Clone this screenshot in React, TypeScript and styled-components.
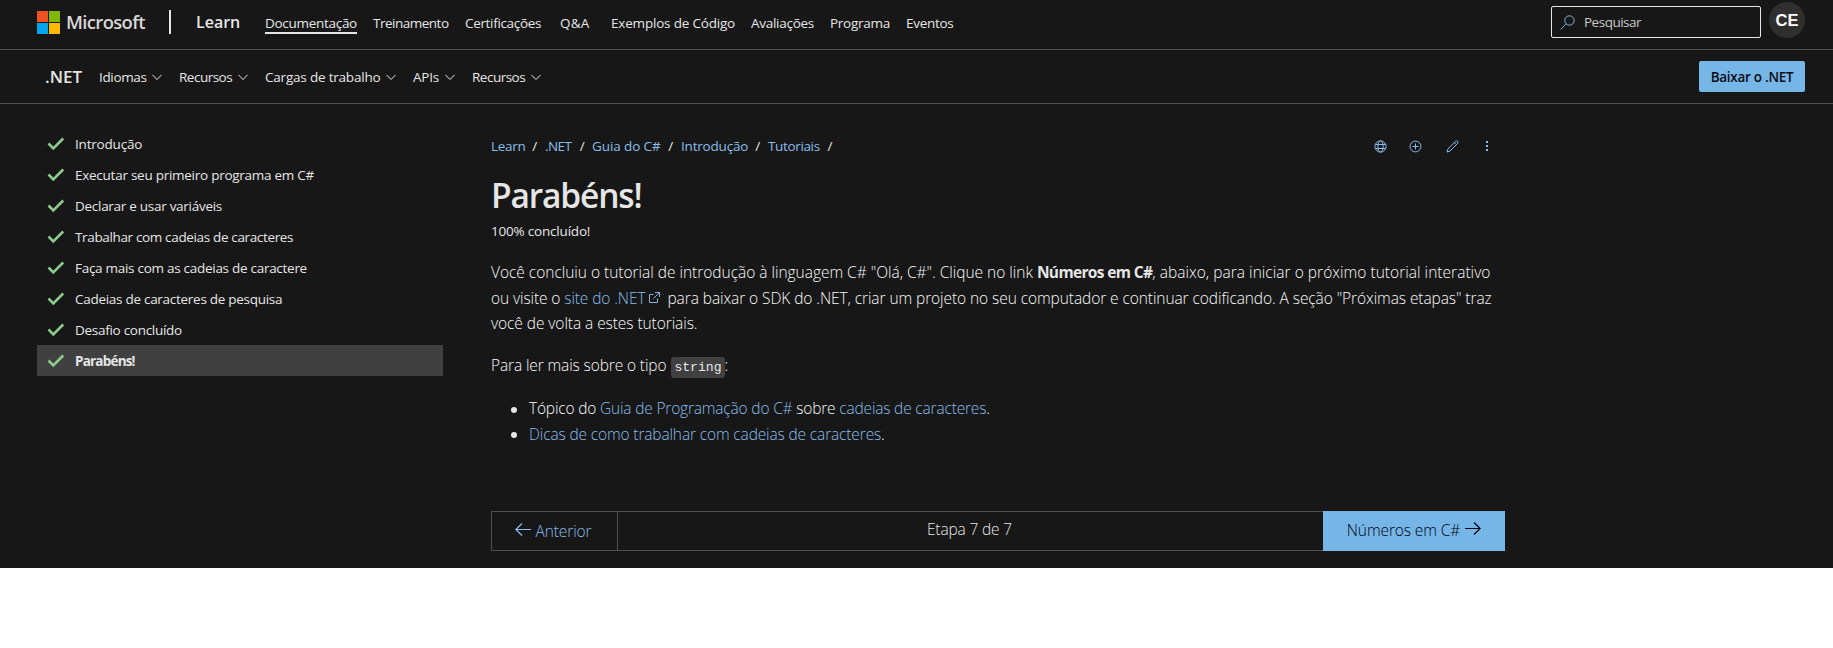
import React from 'react';
import styled, { createGlobalStyle } from 'styled-components';

const GlobalStyle = createGlobalStyle`
  * { box-sizing: border-box; }
  body { margin: 0; background: #fff; font-family: "Open Sans", "Noto Sans", sans-serif; color: #e6e6e6; }
  a { color: inherit; text-decoration: none; }
  ul { list-style: none; margin: 0; padding: 0; }
`;

const Page = styled.div`
  height: 568px;
  background: #171717;
  font-size: 13.5px;
  white-space: nowrap;
`;

const Bar = styled.header<{ $height: number; $left: number }>`
  display: flex;
  align-items: center;
  height: ${p => p.$height}px;
  padding: 0 28px 0 ${p => p.$left}px;
  border-bottom: 1px solid #505050;
`;

const TopBar = styled(Bar)`
  align-items: flex-start;
  padding-top: 2px;
`;

const Logo = styled.a`
  display: flex;
  align-items: center;
  gap: 6px;
  margin-top: 8px;
  height: 24px;
  width: 132px;
`;

const Squares = styled.span`
  display: grid;
  grid-template-columns: 11px 11px;
  grid-auto-rows: 11px;
  gap: 1px;
`;

const Square = styled.i<{ $color: string }>`
  background: ${p => p.$color};
`;

const Wordmark = styled.span`
  font-size: 18.4px;
  font-weight: 600;
  letter-spacing: -0.62px;
  line-height: 24px;
  color: #d8d8d8;
`;

const Divider = styled.span`
  width: 2px;
  height: 24px;
  margin-top: 8px;
  background: #e6e6e6;
`;

const Brand = styled.a<{ $size: number; $width: number }>`
  font-size: ${p => p.$size}px;
  font-weight: 600;
  line-height: 24px;
  width: ${p => p.$width}px;
`;

const LearnBrand = styled(Brand)`
  margin: 8px 0 0 25px;
`;

const TopLink = styled.a<{ $width: number; $gap: number; $track: number; $active?: boolean }>`
  width: ${p => p.$width}px;
  height: 22px;
  margin-top: 10px;
  margin-right: ${p => p.$gap}px;
  line-height: 22px;
  letter-spacing: ${p => p.$track}px;
  border-bottom: ${p => (p.$active ? '2px solid #e6e6e6' : 'none')};
`;

const Search = styled.div`
  display: flex;
  align-items: center;
  gap: 9px;
  width: 210px;
  height: 32px;
  margin: 4px 8px 0 auto;
  padding-left: 8px;
  border: 1px solid #e6e6e6;
  border-radius: 2px;
  letter-spacing: -0.5px;
  color: #c8c8c8;
`;

const Avatar = styled.div`
  width: 36px;
  height: 36px;
  border-radius: 50%;
  background: #2f2f2f;
  color: #fff;
  font: bold 16.5px/36px "Liberation Sans", Arial, sans-serif;
  text-align: center;
`;

const MenuButton = styled.a<{ $width: number; $track: number }>`
  display: flex;
  align-items: center;
  justify-content: space-between;
  width: ${p => p.$width}px;
  margin-right: 17px;
  letter-spacing: ${p => p.$track}px;
  svg { margin-top: 2px; }
`;

const Download = styled.a`
  width: 106px;
  height: 31px;
  margin-left: auto;
  border-radius: 2px;
  background: #75b6e7;
  color: #0b0b14;
  font-weight: 600;
  line-height: 32px;
  text-align: center;
  letter-spacing: -0.28px;
`;

const Body = styled.div`
  display: grid;
  grid-template-columns: 406px 1014px;
  column-gap: 48px;
  padding: 24px 0 0 37px;
`;

const Unit = styled.li<{ $track: number; $active?: boolean }>`
  display: flex;
  align-items: center;
  gap: 10px;
  height: 31px;
  padding-left: 10px;
  letter-spacing: ${p => p.$track}px;
  font-weight: ${p => (p.$active ? 700 : 400)};
  background: ${p => (p.$active ? '#404040' : 'transparent')};
`;

const Main = styled.main`
  padding-top: 6px;
`;

const CrumbRow = styled.div`
  display: flex;
  justify-content: space-between;
  height: 24px;
  line-height: 24px;
`;

const Crumbs = styled.nav`
  display: flex;
`;

const Crumb = styled.span<{ $width: number; $track: number }>`
  display: flex;
  justify-content: space-between;
  width: ${p => p.$width}px;
  margin-right: 8px;
  letter-spacing: ${p => p.$track}px;
`;

const Link = styled.a`
  color: #8abdea;
`;

const Actions = styled.div`
  display: flex;
  align-items: center;
  color: #8abdea;
  gap: 20px;
  padding-right: 9px;
`;

const Title = styled.h1`
  margin: 15px 0 0;
  font-size: 33.5px;
  font-weight: 600;
  line-height: 44px;
  letter-spacing: -1.15px;
`;

const Progress = styled.p`
  margin: 1px 0 0;
  line-height: 26px;
  letter-spacing: -0.2px;
  height: 42px;
`;

const Paragraph = styled.p`
  margin: 0 0 16px;
  font-size: 15.5px;
  font-weight: 300;
  line-height: 25.6px;
  color: #fafafa;
`;

const Run = styled.span<{ $track: number }>`
  letter-spacing: ${p => p.$track}px;
`;

const Strong = styled.strong`
  font-weight: 700;
  letter-spacing: -0.65px;
  color: #e6e6e6;
`;

const OutIcon = styled.svg`
  width: 11px;
  height: 11px;
  margin: 0 7px 0 4px;
  vertical-align: 1px;
  color: #83b4de;
`;

const Code = styled.code`
  padding: 3px 3px;
  margin-left: 5px;
  border-radius: 3px;
  background: #404040;
  color: #e6e6e6;
  font: 13.1px "Liberation Mono", monospace;
`;

const Bullets = styled.ul`
  padding-top: 2px;
`;

const Bullet = styled.li<{ $track: number }>`
  display: flex;
  align-items: center;
  font-size: 15.5px;
  font-weight: 300;
  line-height: 25.6px;
  color: #fafafa;
  letter-spacing: ${p => p.$track}px;
  &::before {
    content: '';
    width: 6px;
    height: 6px;
    margin: 1px 12px 0 20px;
    border-radius: 50%;
    background: #e6e6e6;
  }
`;

const Pager = styled.nav`
  display: grid;
  grid-template-columns: 127px 1fr 182px;
  height: 40px;
  margin-top: 63px;
  font-size: 15.5px;
  font-weight: 300;
  text-align: center;
`;

const Step = styled.div<{ $kind: 'prev' | 'status' | 'next' }>`
  display: flex;
  align-items: center;
  justify-content: center;
  gap: ${p => (p.$kind === 'prev' ? 4 : 5)}px;
  padding: ${p => ({ prev: '0 2px 0 0', status: '0 2px 3px 0', next: '0 0 1px' })[p.$kind]};
  border: 1px solid ${p => (p.$kind === 'next' ? '#75b6e7' : '#505050')};
  border-width: ${p => (p.$kind === 'status' ? '1px 0' : '1px')};
  background: ${p => (p.$kind === 'next' ? '#75b6e7' : 'transparent')};
  color: ${p => ({ prev: '#8abdea', status: '#e6e6e6', next: '#000010' })[p.$kind]};
  letter-spacing: ${p => (p.$kind === 'status' ? -0.15 : -0.1)}px;
  svg { margin-bottom: 2px; }
`;

const Check = () => (
  <svg width="18" height="14" viewBox="0 0 18 14" fill="none" stroke="#8dcb8d" strokeWidth="2.6">
    <path d="M1.5 6.5 6.3 11.3 16.2 1.5" />
  </svg>
);

const Chevron = () => (
  <svg width="10" height="7" viewBox="0 0 10 7" fill="none" stroke="currentColor">
    <path d="m.4 .8 4.6 4.7 4.6-4.7" />
  </svg>
);

const Arrow = ({ back }: { back?: boolean }) => (
  <svg width="16" height="14" viewBox="0 0 16 14" fill="none" stroke="currentColor" strokeWidth="1.2">
    <path d={back ? 'M16 6.5H.8M7 .5l-6.2 6L7 12.5' : 'M0 6.5h15.2M9 .5l6.2 6-6.2 6'} />
  </svg>
);

const topLinks = [
  ['Documentação', 92, 16, -0.29], ['Treinamento', 75, 17, -0.5], ['Certificações', 76, 19, -0.33],
  ['Q&A', 31, 20, 0.2], ['Exemplos de Código', 124, 16, -0.19], ['Avaliações', 63, 16, -0.27],
  ['Programa', 60, 16, -0.26], ['Eventos', 48, 0, -0.28],
] as const;

const menus = [
  ['Idiomas', 63, -0.35], ['Recursos', 69, -0.5], ['Cargas de trabalho', 131, -0.2],
  ['APIs', 42, -0.2], ['Recursos', 69, -0.5],
] as const;

const units = [
  ['Introdução', -0.2], ['Executar seu primeiro programa em C#', -0.26], ['Declarar e usar variáveis', -0.28],
  ['Trabalhar com cadeias de caracteres', -0.35], ['Faça mais com as cadeias de caractere', -0.28],
  ['Cadeias de caracteres de pesquisa', -0.28], ['Desafio concluído', -0.28], ['Parabéns!', -0.8],
] as const;

const crumbs = [
  ['Learn', 46, -0.3], ['.NET', 39, -0.6], ['Guia do C#', 81, -0.1], ['Introdução', 79, -0.2], ['Tutoriais', 64, -0.35],
] as const;

export default function App() {
  return (
    <Page>
      <GlobalStyle />
      <TopBar $height={50} $left={37}>
        <Logo href="#">
          <Squares>
            <Square $color="#f25022" /><Square $color="#7fba00" />
            <Square $color="#00a4ef" /><Square $color="#ffb900" />
          </Squares>
          <Wordmark>Microsoft</Wordmark>
        </Logo>
        <Divider />
        <LearnBrand href="#" $size={16} $width={69}>Learn</LearnBrand>
        {topLinks.map(([label, width, gap, track], i) => (
          <TopLink href="#" key={label} $width={width} $gap={gap} $track={track} $active={i === 0}>{label}</TopLink>
        ))}
        <Search>
          <svg width="15" height="15" viewBox="0 0 15 15" fill="none" stroke="#83b4de">
            <circle cx="9.5" cy="5.5" r="4.7" />
            <path d="M6.2 8.8.6 14.4" />
          </svg>
          Pesquisar
        </Search>
        <Avatar>CE</Avatar>
      </TopBar>

      <Bar $height={54} $left={45}>
        <Brand href="#" $size={17} $width={54}>.NET</Brand>
        {menus.map(([label, width, track], i) => (
          <MenuButton href="#" key={i} $width={width} $track={track}>{label}<Chevron /></MenuButton>
        ))}
        <Download href="#">Baixar o .NET</Download>
      </Bar>

      <Body>
        <ul>
          {units.map(([label, track], i) => (
            <Unit key={label} $track={track} $active={i === 7}><Check />{label}</Unit>
          ))}
        </ul>
        <Main>
          <CrumbRow>
            <Crumbs>
              {crumbs.map(([label, width, track]) => (
                <Crumb key={label} $width={width} $track={track}><Link href="#">{label}</Link><span>/</span></Crumb>
              ))}
            </Crumbs>
            <Actions>
              <svg width="13" height="13" viewBox="0 0 13 13" fill="none" stroke="currentColor">
                <circle cx="6.5" cy="6.5" r="5.6" />
                <ellipse cx="6.5" cy="6.5" rx="2.6" ry="5.6" />
                <path d="M1.5 4.5h10M1.5 8.5h10" />
              </svg>
              <svg width="17" height="13" viewBox="-2 0 17 13" fill="none" stroke="currentColor">
                <circle cx="6.5" cy="6.5" r="5.4" />
                <path d="M3.5 6.5h6M6.5 3.5v6" />
              </svg>
              <svg width="17" height="13" viewBox="-2 0 17 13" fill="none" stroke="currentColor">
                <path d="m1 12 .9-3.1 7.6-7.6q1.2-.9 2.1 0t0 2.1L4 11.1zM8.3 2.5l2.1 2.1" />
              </svg>
              <svg width="15" height="13" viewBox="-5 0 15 13" fill="currentColor">
                <path d="M0 1h2v2H0zM0 5h2v2H0zM0 9h2v2H0z" />
              </svg>
            </Actions>
          </CrumbRow>
          <Title>Parabéns!</Title>
          <Progress>100% concluído!</Progress>
          <Paragraph>
            <Run $track={-0.02}>Você concluiu o tutorial de introdução à linguagem C# "Olá, C#". Clique no link </Run>
            <Strong>Números em C#</Strong>
            <Run $track={0.03}>, abaixo, para iniciar o próximo tutorial interativo</Run>
            <br />
            <Run $track={-0.1}>ou visite o <Link href="#">site do .NET</Link></Run>
            <OutIcon viewBox="0 0 11 11" fill="none" stroke="currentColor">
              <path d="M4.5 2.5h-4v8h8v-4M6 .5h4.5V5M10.5.5l-6 6" />
            </OutIcon>
            <Run $track={-0.08}>para baixar o SDK do .NET, criar um projeto no seu computador e continuar codificando. A seção "Próximas etapas" traz</Run>
            <br />
            <Run $track={-0.07}>você de volta a estes tutoriais.</Run>
          </Paragraph>
          <Paragraph>
            <Run $track={-0.12}>Para ler mais sobre o tipo</Run><Code>string</Code>:
          </Paragraph>
          <Bullets>
            <Bullet $track={-0.18}>
              <span>Tópico do <Link href="#">Guia de Programação do C#</Link> sobre <Link href="#">cadeias de caracteres</Link>.</span>
            </Bullet>
            <Bullet $track={-0.14}>
              <span><Link href="#">Dicas de como trabalhar com cadeias de caracteres</Link>.</span>
            </Bullet>
          </Bullets>
          <Pager>
            <Step $kind="prev"><Arrow back />Anterior</Step>
            <Step $kind="status">Etapa 7 de 7</Step>
            <Step $kind="next">Números em C#<Arrow /></Step>
          </Pager>
        </Main>
      </Body>
    </Page>
  );
}
